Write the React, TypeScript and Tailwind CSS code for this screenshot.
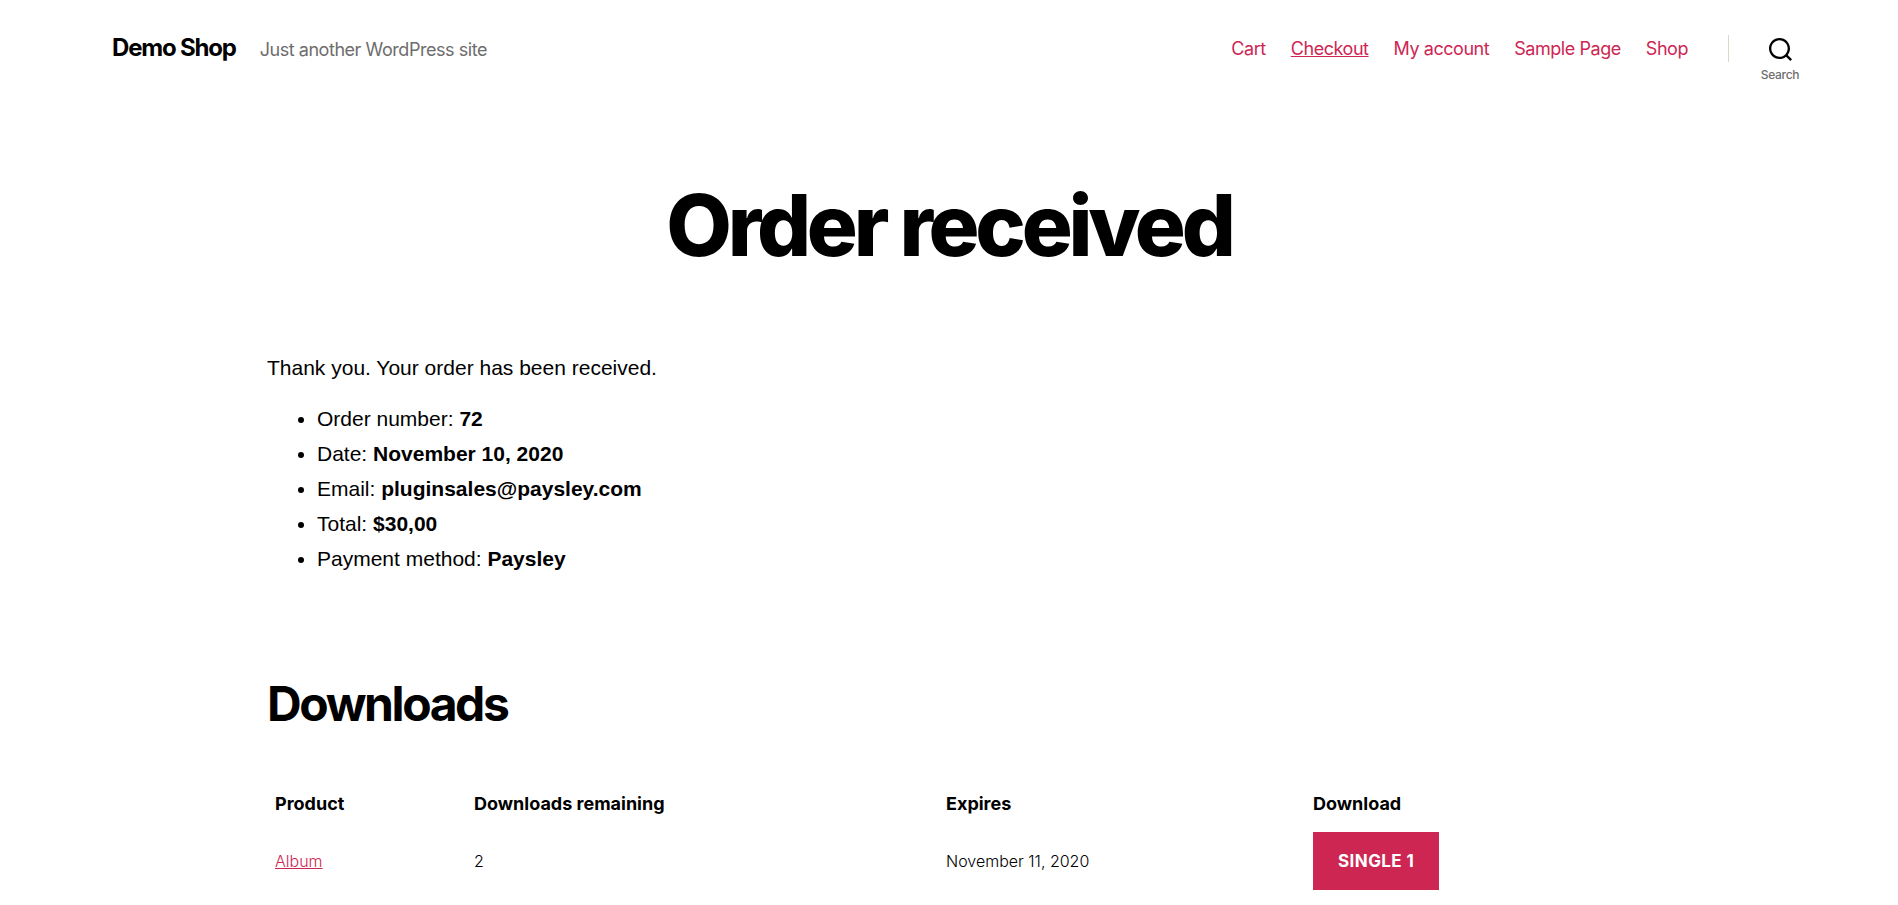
import React from "react";

const navItems = ["Cart", "Checkout", "My account", "Sample Page", "Shop"];

const details = [
  ["Order number:", "72"],
  ["Date:", "November 10, 2020"],
  ["Email:", "pluginsales@paysley.com"],
  ["Total:", "$30,00"],
  ["Payment method:", "Paysley"],
];

function Header() {
  return (
    <header className="flex items-start justify-between pt-7 pr-[87px] pl-28">
      <div className="flex items-baseline gap-6">
        <a href="#" className="text-[24px] leading-10 font-bold tracking-tighter text-black">Demo Shop</a>
        <p className="text-[18px] leading-10 tracking-tight text-[#6d6d6d]">Just another WordPress site</p>
      </div>
      <div className="flex items-start">
        <nav aria-label="Main" className="flex gap-[25px] pt-[5px] pr-10 text-[18px] leading-8 tracking-tight text-[#cd2653]">
          {navItems.map((item) => (
            <a key={item} href="#" className={item === "Checkout" ? "underline" : ""}>{item}</a>
          ))}
        </nav>
        <div className="mt-[7px] h-[27px] w-px bg-[#dcd7ca]" />
        <button type="button" className="ml-5 flex w-[62px] flex-col items-center gap-1.5 pt-2.5">
          <svg viewBox="0 0 23 23" className="size-[23px]" aria-hidden="true">
            <path
              fill="#000"
              d="M38.710696,48.0601792 L43,52.3494831 L41.3494831,54 L37.0601792,49.710696 C35.2632422,51.1481185 32.9839107,52.0076499 30.5038249,52.0076499 C24.7027226,52.0076499 20,47.3049272 20,41.5038249 C20,35.7027226 24.7027226,31 30.5038249,31 C36.3049272,31 41.0076499,35.7027226 41.0076499,41.5038249 C41.0076499,43.9839107 40.1481185,46.2632422 38.710696,48.0601792 Z M36.3875844,47.1716785 C37.8030221,45.7026647 38.6734666,43.7048964 38.6734666,41.5038249 C38.6734666,36.9918565 35.0157934,33.3341833 30.5038249,33.3341833 C25.9918565,33.3341833 22.3341833,36.9918565 22.3341833,41.5038249 C22.3341833,46.0157934 25.9918565,49.6734666 30.5038249,49.6734666 C32.7048964,49.6734666 34.7026647,48.8030221 36.1716785,47.3875844 C36.2023931,47.347638 36.2360451,47.3092237 36.2726343,47.2726343 C36.3092237,47.2360451 36.347638,47.2023931 36.3875844,47.1716785 Z"
              transform="translate(-20 -31)"
            />
          </svg>
          <span className="text-[12px] leading-4 font-medium tracking-tight text-[#6d6d6d]">Search</span>
        </button>
      </div>
    </header>
  );
}

export default function App() {
  return (
    <div className="min-h-screen bg-white font-['Inter',sans-serif] text-black">
      <Header />
      <main>
        <h1 className="mt-[87px] text-center text-[85px] leading-[112px] font-extrabold tracking-tighter">Order received</h1>
        <div className="mx-auto max-w-[1364px] px-4 min-[1400px]:px-0">
          <div className="font-['Liberation_Sans',sans-serif] text-[21px]">
            <p className="mt-[68px] leading-[35px]">Thank you. Your order has been received.</p>
            <ul className="mt-4 list-disc pl-[50px] leading-[35px]">
              {details.map(([label, value]) => (
                <li key={label}>{label} <strong>{value}</strong></li>
              ))}
            </ul>
          </div>
          <h2 className="mt-24 text-[48px] leading-[64px] font-bold tracking-tighter">Downloads</h2>
          <table className="mt-11 w-full text-left">
            <thead className="text-[18px] leading-8">
              <tr>
                <th className="w-[199px] px-2 py-2 font-bold">Product</th>
                <th className="w-[472px] px-2 py-2 font-bold">Downloads remaining</th>
                <th className="w-[367px] px-2 py-2 font-bold">Expires</th>
                <th className="px-2 py-2 font-bold">Download</th>
              </tr>
            </thead>
            <tbody className="text-[16px] font-light">
              <tr>
                <td className="px-2 py-1"><a href="#" className="text-[#cd2653] underline">Album</a></td>
                <td className="px-2 py-1">2</td>
                <td className="px-2 py-1">November 11, 2020</td>
                <td className="px-2 py-1"><a href="#" className="inline-block bg-[#cd2653] px-[25px] text-[17px] leading-[58px] font-bold tracking-wide text-white uppercase">Single 1</a></td>
              </tr>
            </tbody>
          </table>
        </div>
      </main>
    </div>
  );
}
